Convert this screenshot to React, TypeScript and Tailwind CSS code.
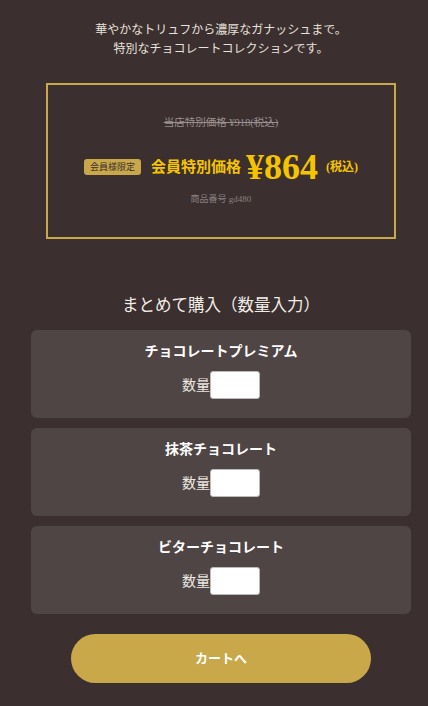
import React from 'react';

const items = ['チョコレートプレミアム', '抹茶チョコレート', 'ビターチョコレート'];

const App: React.FC = () => {
  return (
    <div
      className="min-h-[706px] bg-[#3c2f2f] pl-[31px] pr-[17px] pt-[21px] pb-[24px] text-center"
      style={{ fontFamily: '"Liberation Serif", "Noto Sans CJK JP", serif' }}
    >
      <p className="text-[12px] leading-[19px] text-[#e6e2dc]">
        華やかなトリュフから濃厚なガナッシュまで。
        <br />
        特別なチョコレートコレクションです。
      </p>

      <div className="mx-[15px] mt-[24px] border-2 border-[#c9a84a] pt-[30px] pb-[31px]">
        <p className="text-[10.5px] leading-[16px] text-[#9a9090] line-through">当店特別価格 ¥918(税込)</p>
        <div className="mt-[16px] flex h-[40px] items-center justify-center">
          <span className="rounded-[3px] bg-[#c9a84a] px-[6px] py-[2px] text-[9px] leading-[12px] text-[#3c2f2f]">
            会員様限定
          </span>
          <span className="ml-[10px] text-[15px] font-bold text-[#f5c400]">会員特別価格</span>
          <span className="ml-[5px] text-[36px] leading-[40px] font-bold text-[#f5c400]">¥864</span>
          <span className="ml-[8px] text-[12px] font-bold text-[#f5c400]">(税込)</span>
        </div>
        <p className="mt-[6px] text-[9px] leading-[13px] text-[#8a8080]">商品番号 gd480</p>
      </div>

      <h2 className="mt-[56px] text-[16.5px] leading-[22px] text-[#f2eee8]">まとめて購入（数量入力）</h2>

      <div className="mt-[13px] flex flex-col gap-[10px]">
        {items.map((name) => (
          <div key={name} className="rounded-[6px] bg-[#4f4545] pt-[13px] pb-[19px]">
            <p className="text-[14px] leading-[18px] font-bold text-white">{name}</p>
            <div className="mt-[10px] flex items-center justify-center">
              <span className="text-[14px] text-[#ece8e2]">数量</span>
              <input
                type="text"
                className="h-[28px] w-[50px] rounded-[3px] border border-[#bbb] bg-white"
              />
            </div>
          </div>
        ))}
      </div>

      <button className="mx-auto mt-[20px] flex h-[49px] w-[300px] items-center justify-center rounded-full bg-[#c9a84a] text-[13px] font-bold text-white">
        カートへ
      </button>
    </div>
  );
};

export default App;
